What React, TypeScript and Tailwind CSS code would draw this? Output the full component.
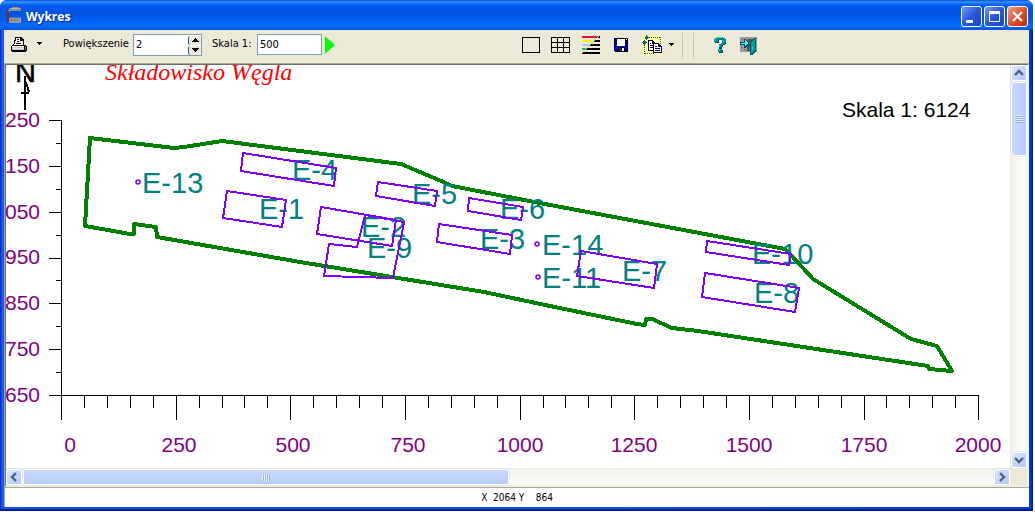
import React from "react";

type Point = [number, number];

const boundary: Point[] = [
  [90, 138], [174, 148], [184, 147], [222, 141], [401, 164], [446, 183], [452, 186], [550, 205],
  [785, 249], [792, 256], [813, 279], [911, 339], [937, 346], [952, 371], [929, 369], [928, 366],
  [698, 331], [672, 328], [652, 319], [646, 319], [645, 325], [637, 324], [550, 306], [484, 292],
  [300, 262], [157, 237], [156, 227], [134, 224], [134, 234], [130, 234], [85, 226],
];

const areas: Point[][] = [
  [[243, 153], [336, 168], [334, 186], [241, 171]],
  [[227, 191], [286, 200], [282, 227], [223, 218]],
  [[378, 182], [437, 191], [435, 206], [376, 196]],
  [[469, 198], [523, 207], [521, 220], [468, 211]],
  [[439, 224], [512, 235], [510, 254], [437, 242]],
  [[321, 207], [396, 220], [392, 246], [317, 234]],
  [[365, 215], [404, 222], [393, 278], [324, 276], [329, 244], [357, 247]],
  [[581, 251], [657, 264], [654, 288], [577, 276]],
  [[707, 241], [791, 254], [789, 265], [706, 252]],
  [[705, 273], [799, 288], [795, 312], [702, 297]],
];

const labels: { text: string; x: number; y: number }[] = [
  { text: "E-13", x: 142, y: 193 },
  { text: "E-4", x: 292, y: 180 },
  { text: "E-1", x: 259, y: 219 },
  { text: "E-5", x: 412, y: 204 },
  { text: "E-6", x: 500, y: 219 },
  { text: "E-2", x: 361, y: 237 },
  { text: "E-9", x: 367, y: 258 },
  { text: "E-3", x: 480, y: 249 },
  { text: "E-14", x: 542, y: 255 },
  { text: "E-11", x: 542, y: 288 },
  { text: "E-7", x: 622, y: 281 },
  { text: "E-10", x: 752, y: 264 },
  { text: "E-8", x: 754, y: 303 },
];

const emitters: Point[] = [[138, 182], [537, 244], [538, 277]];

const xLabels: [string, number][] = [
  ["0", 70], ["250", 179], ["500", 293], ["750", 408], ["1000", 520],
  ["1250", 634], ["1500", 749], ["1750", 864], ["2000", 978],
];
const yLabels = ["250", "150", "050", "950", "850", "750", "650"];

const toPoints = (points: Point[]) => points.map((p) => p.join(",")).join(" ");

function Chart() {
  const xTicks = Array.from({ length: 41 }, (_, i) => i);
  const yTicks = Array.from({ length: 13 }, (_, i) => i);
  return (
    <svg width="1004" height="403" viewBox="6 65 1004 403" className="block max-w-none" role="img" aria-label="Składowisko Węgla">
      <g fontFamily="'Liberation Serif', serif" fontSize="24" fontStyle="italic" fill="#ff0000">
        <text x="105" y="80">Składowisko Węgla</text>
      </g>
      <g fontFamily="'Liberation Sans', sans-serif">
        <text x="15" y="82" fontSize="29" fill="#000" stroke="#000" strokeWidth="0.5">N</text>
        <text x="842" y="117" fontSize="21" fill="#000">Skala 1: 6124</text>
        <g fontSize="21" fill="#800080">
          {xLabels.map(([text, x]) => (
            <text key={text} x={x} y="452" textAnchor="middle">{text}</text>
          ))}
          {yLabels.map((text, i) => (
            <text key={text} x="40" y={127 + Math.round(i * 45.8)} textAnchor="end">{text}</text>
          ))}
        </g>
      </g>
      <path d="M25 76V110M21 93H29M26 82L29 92" fill="none" stroke="#000" strokeWidth="2" shapeRendering="crispEdges" />
      <g stroke="#000" strokeWidth="1" shapeRendering="crispEdges">
        <path d="M61.5 120V419M49 395.5H979" fill="none" />
        {xTicks.map((i) => {
          const x = Math.round(61 + i * 22.93) + 0.5;
          return <line key={i} x1={x} x2={x} y1="395" y2={i % 5 === 0 ? 420 : 408} />;
        })}
        {yTicks.map((i) => {
          const y = Math.round(120 + i * 22.92) + 0.5;
          return <line key={i} x1={i % 2 === 0 ? 49 : 56} x2="61" y1={y} y2={y} />;
        })}
      </g>
      <polygon points={toPoints(boundary)} fill="none" stroke="#008000" strokeWidth="4" strokeLinejoin="round" shapeRendering="crispEdges" />
      <g fontFamily="'Liberation Sans', sans-serif" fontSize="29" fill="#008080">
        {labels.map((l) => (
          <text key={l.text} x={l.x} y={l.y}>{l.text}</text>
        ))}
      </g>
      <g fill="none" stroke="#8000ff" strokeWidth="2" shapeRendering="crispEdges">
        {areas.map((a, i) => (
          <polygon key={i} points={toPoints(a)} />
        ))}
      </g>
      <g fill="#fff" stroke="#8000ff" strokeWidth="1.6">
        {emitters.map(([x, y]) => (
          <circle key={`${x}-${y}`} cx={x} cy={y} r="2" />
        ))}
      </g>
    </svg>
  );
}

function FactoryIcon() {
  return (
    <svg width="16" height="18" viewBox="0 0 16 18" shapeRendering="crispEdges" aria-hidden="true">
      <path d="M1 4h1V2h3V1h7v1h2v3H3v1H1z" fill="#8d8d8d" />
      <path d="M4 2h8v1H4z" fill="#b5b5b5" />
      <path d="M0 5h2v11H0z" fill="#8c2020" />
      <path d="M2 12h2v-1h1v1h2v-1h1v1h2v-1h1v1h2v-1h1v6H2z" fill="#9a9a9e" />
      <path d="M4 13h1v2H4zM7 13h1v2H7zM10 13h1v2h-1z" fill="#6c6c74" />
    </svg>
  );
}

function PrinterIcon() {
  return (
    <svg width="16" height="16" viewBox="0 0 16 16" shapeRendering="crispEdges" aria-hidden="true">
      <path d="M4 0h6l3 3v6H2V7h1V3h1z" fill="#000" />
      <path d="M5 1h4v3h3v4H3V7h1V4h1z" fill="#fff" />
      <path d="M6 2h2v1H6zM6 4h2v1H6zM5 6h5v1H5z" fill="#000" />
      <path d="M1 8h14v1h1v5h-1v1H1v-1H0V9h1z" fill="#000" />
      <path d="M1 9h12v1H1z" fill="#fff" />
      <path d="M1 10h12v3H1z" fill="#c8c8c8" />
      <path d="M1 11h12v1H1z" fill="#e4e4e4" />
      <path d="M14 9h1v4h-1z" fill="#808080" />
    </svg>
  );
}

function DropArrow() {
  return (
    <svg width="5" height="3" viewBox="0 0 5 3" shapeRendering="crispEdges" aria-hidden="true">
      <path d="M0 0h5v1H4v1H3v1H2V2H1V1H0z" fill="#000" />
    </svg>
  );
}

function GridIcon() {
  return (
    <svg width="19" height="16" viewBox="0 0 19 16" shapeRendering="crispEdges" aria-hidden="true">
      <path d="M0 0h19v16H0z" fill="#000" />
      <path d="M1 1h5v4H1zM7 1h5v4H7zM13 1h5v4h-5zM1 6h5v4H1zM7 6h5v4H7zM13 6h5v4h-5zM1 11h5v4H1zM7 11h5v4H7zM13 11h5v4h-5z" fill="#ece9d8" />
    </svg>
  );
}

function StripesIcon() {
  return (
    <svg width="19" height="20" viewBox="0 0 19 20" aria-hidden="true">
      <path d="M0 2h18v2H0zM0 6h18v2H0zM0 10h18v2H0zM0 14h18v2H0zM0 18h18v2H0z" fill="#000" />
      <path d="M0 2h17l-2 2H0z" fill="#dc143c" />
      <path d="M0 6h13l-2 2H0z" fill="#fff200" />
      <path d="M0 10h9l-2 2H0z" fill="#a6caf0" />
      <path d="M0 14h5l-2 2H0z" fill="#22b14c" />
      <path d="M19 0L0 19" stroke="#c5d0c0" strokeWidth="1" />
    </svg>
  );
}

function FloppyIcon() {
  return (
    <svg width="14" height="14" viewBox="0 0 14 14" shapeRendering="crispEdges" aria-hidden="true">
      <path d="M0 0h14v14H1v-1H0z" fill="#000" />
      <path d="M1 1h2v7h8V3h2v10H1z" fill="#0000d0" />
      <path d="M3 1h8v7H3z" fill="#fff" />
      <path d="M12 1h1v1h-1z" fill="#fff" />
      <path d="M4 9h7v5H4z" fill="#000" />
      <path d="M8 10h2v3H8z" fill="#fff" />
      <path d="M5 10h2v3H5z" fill="#303060" />
    </svg>
  );
}

function CopyIcon() {
  return (
    <svg width="20" height="20" viewBox="0 0 20 20" shapeRendering="crispEdges" aria-hidden="true">
      <path d="M0 0h20v20H0z" fill="#ffffa0" />
      <path d="M7 2.500H19M2.500 10V19M3 18.500H12M18.500 2V9" fill="none" stroke="#00648c" strokeDasharray="1 1" />
      <path d="M4 0h1v1h1v1h1v1H6v1H5v1H4V4H3V2h1zM2 5h1v1h1v1h1v1H4v1H3v1H2V9H1V8H0V7h1V6h1z" fill="#00648c" />
      <path d="M6 5h4l3 3v8H6z" fill="#000" />
      <path d="M7 6h3v3h2v6H7z" fill="#fff" />
      <path d="M8 8h1v1H8zM8 10h3v1H8zM8 12h3v1H8z" fill="#000" />
      <path d="M11 8h5l4 4v6h-9z" fill="#000060" />
      <path d="M12 9h4v3h3v5h-7z" fill="#fff" />
      <path d="M13 11h2v1h-2zM13 13h5v1h-5zM13 15h5v1h-5z" fill="#000060" />
    </svg>
  );
}

function HelpIcon() {
  return (
    <svg width="13" height="16" viewBox="0 0 13 16" shapeRendering="crispEdges" aria-hidden="true">
      <path d="M3 1h7v1h2v5h-1v1H9v2H8v2H5V8h2V7h1V3H5v3H1V3h1V2h1zM5 13h4v3H5z" fill="#004a5a" />
      <path d="M3 0h6v1h2v1h1v3h-1v2H9v1H8v2H5V7h2V6h1V2H5v1H4v2H0V2h1V1h2zM4 12h4v3H4z" fill="#008c96" />
      <path d="M3 0h5v1H3zM1 2h1v2H1zM9 3h1v2H9zM5 8h1v2H5zM5 12h1v2H5z" fill="#00e0e0" />
    </svg>
  );
}

function ExitIcon() {
  return (
    <svg width="18" height="19" viewBox="0 0 18 19" shapeRendering="crispEdges" aria-hidden="true">
      <path d="M0 1h17v15H0z" fill="#9a9a9a" />
      <path d="M7 3h7v12H7z" fill="#585858" />
      <path d="M0 5h1v1H0zM2 3h1v1H2zM4 13h1v1H4zM1 11h1v1H1z" fill="#606060" />
      <path d="M10 5l5-3h1v14l-4 3h-2z" fill="#005a64" />
      <path d="M11 6l4-3v12l-4 3z" fill="#009aa4" />
      <path d="M12 11h1v2h-1z" fill="#00ffff" />
      <path d="M0 6h4V3h2v1h1v1h1v1h1v3H8v1H7v1H6v1H4V9H0z" fill="#004a5a" />
      <path d="M1 7h4V4h1v1h1v1h1v2H7v1H6v1H5V8H1z" fill="#40ffff" />
    </svg>
  );
}

function TitleButton({ label, close, children }: { label: string; close?: boolean; children: React.ReactNode }) {
  return (
    <button
      aria-label={label}
      className={
        close
          ? "flex size-[21px] items-center justify-center rounded-[3px] border border-white bg-linear-to-br from-[#f0a080] via-[#e0502c] to-[#b83008]"
          : "flex size-[21px] items-center justify-center rounded-[3px] border border-white bg-linear-to-br from-[#7096f0] via-[#2858dc] to-[#1444c8]"
      }
    >
      <svg width="15" height="15" viewBox="0 0 15 15" fill="none" stroke="#fff" aria-hidden="true">{children}</svg>
    </button>
  );
}

function ScrollButton({ label, path }: { label: string; path: string }) {
  return (
    <button
      aria-label={label}
      className="flex size-4 shrink-0 items-center justify-center rounded-[2px] border border-white bg-linear-to-br from-[#dce6fe] to-[#b0c8f8] shadow-[0_0_1px_#6a90d8]"
    >
      <svg width="10" height="10" viewBox="0 0 10 10" fill="none" stroke="#4d6185" strokeWidth="2.4" aria-hidden="true">
        <path d={path} />
      </svg>
    </button>
  );
}

export default function App() {
  return (
    <div className="flex h-screen bg-white pr-[2px] pb-px font-['DejaVu_Sans_Condensed','DejaVu_Sans',sans-serif] text-[11px] leading-[14px] text-black">
      <main className="flex min-w-0 flex-1 flex-col overflow-hidden rounded-t-[7px] bg-[#0842dc]">
        <header className="flex h-[30px] shrink-0 items-center bg-[linear-gradient(to_bottom,#0050d8_0px,#3c90ff_2px,#0a6cf8_4px,#0058e6_7px,#0054e3_13px,#005cf4_20px,#0068ff_24px,#006aff_27px,#0050d0_30px)] pr-[5px] pl-[7px]">
          <FactoryIcon />
          <h1 className="ml-[3px] flex-1 pt-1 font-['Open_Sans',sans-serif] text-[12px] leading-4 font-bold text-white [text-shadow:1px_1px_0_#0a2a90]">Wykres</h1>
          <div className="flex gap-[2px] pt-[3px]">
            <TitleButton label="Minimalizuj"><path d="M2 12.500h7" strokeWidth="3" /></TitleButton>
            <TitleButton label="Maksymalizuj"><path d="M2 3.500h11" strokeWidth="3" /><path d="M2.500 3v9.500h10V3" /></TitleButton>
            <TitleButton label="Zamknij" close><path d="M3 3l9 9M12 3l-9 9" strokeWidth="2.200" /></TitleButton>
          </div>
        </header>
        <div className="flex min-h-0 flex-1 flex-col bg-[linear-gradient(to_right,#0019cf_0px,#0831d9_1px,#166aee_2px,#0855dd_4px,#0855dd_50%,#0040e0_calc(100%-3px),#001890_100%)] px-1 pb-1 shadow-[inset_0_-2px_0_#001890]">
          <div className="flex min-h-0 flex-1 flex-col bg-[#ece9d8]">
            <div className="flex h-[33px] shrink-0 items-center pb-[6px] pl-[7px]">
              <button aria-label="Drukuj" className="mt-[2px]"><PrinterIcon /></button>
              <button aria-label="Opcje drukowania" className="ml-[10px]"><DropArrow /></button>
              <label htmlFor="zoom" className="ml-[21px] w-[70px] whitespace-nowrap">Powiększenie</label>
              <div className="mt-[3px] flex h-[22px] w-[69px] border border-[#7f9db9] bg-white">
                <input id="zoom" defaultValue="2" className="w-0 min-w-0 flex-1 pl-[2px] outline-none" />
                <div className="flex w-[13px] flex-col justify-center gap-px">
                  <button aria-label="Zwiększ" className="flex h-[9px] items-center justify-center rounded-[2px] border-l border-[#1c5a9a] bg-[#ece9d8]">
                    <svg width="7" height="4" viewBox="0 0 7 4" shapeRendering="crispEdges" aria-hidden="true"><path d="M3 0h1v1h1v1h1v1h1v1H0V3h1V2h1V1h1z" /></svg>
                  </button>
                  <button aria-label="Zmniejsz" className="flex h-[9px] items-center justify-center rounded-[2px] border-l border-[#1c5a9a] bg-[#ece9d8]">
                    <svg width="7" height="4" viewBox="0 0 7 4" shapeRendering="crispEdges" aria-hidden="true"><path d="M0 0h7v1H6v1H5v1H4v1H3V3H2V2H1V1H0z" /></svg>
                  </button>
                </div>
              </div>
              <label htmlFor="scale" className="ml-[10px] w-[45px] whitespace-nowrap">Skala 1:</label>
              <input id="scale" defaultValue="500" className="mt-[2px] h-[21px] w-[65px] border border-[#7f9db9] bg-white pl-[2px] outline-none" />
              <button aria-label="Zastosuj" className="mt-[3px] ml-[3px]">
                <svg width="10" height="18" viewBox="0 0 10 18" aria-hidden="true"><path d="M0 0L10 9L0 18z" fill="#00ff00" /></svg>
              </button>
              <button aria-label="Ramka" className="mt-[3px] ml-[187px] h-4 w-[18px] border border-black" />
              <button aria-label="Siatka" className="mt-[3px] ml-[11px]"><GridIcon /></button>
              <button aria-label="Kolory" className="ml-[12px]"><StripesIcon /></button>
              <button aria-label="Zapisz" className="mt-[3px] ml-[13px]"><FloppyIcon /></button>
              <button aria-label="Kopiuj" className="mt-[3px] ml-[14px]"><CopyIcon /></button>
              <button aria-label="Opcje kopiowania" className="mt-px ml-[7px]"><DropArrow /></button>
              <div className="mt-1 ml-[8px] h-[25px] w-[12px] border-x border-[#c9c5b0]" />
              <button aria-label="Pomoc" className="mt-[3px] ml-[20px]"><HelpIcon /></button>
              <button aria-label="Wyjście" className="mt-[3px] ml-[13px]"><ExitIcon /></button>
            </div>
            <section className="min-h-0 flex-1 border-t border-l border-[#aca899]">
              <div className="flex h-full border-t border-r-2 border-b-2 border-l border-t-[#716f64] border-r-[#f4f3ea] border-b-[#f1efe2] border-l-[#716f64]">
                <div className="flex min-w-0 flex-1 flex-col">
                  <div className="min-h-0 flex-1 overflow-hidden bg-white"><Chart /></div>
                  <div className="flex h-[17px] shrink-0 items-center justify-between border-t border-[#eeede5] bg-linear-to-b from-[#f3f1ec] to-[#fefefb]">
                    <ScrollButton label="W lewo" path="M7 1L3 5L7 9" />
                    <div className="ml-px flex min-w-0 flex-1">
                      <div className="flex h-4 w-1/2 items-center justify-center gap-px rounded-[2px] border border-white bg-linear-to-b from-[#c9d8fc] via-[#c3d3fd] to-[#b3cbf8] shadow-[0_0_1px_#6a90d8]">
                        <div className="h-[7px] w-2 bg-[repeating-linear-gradient(to_right,#eef4fe_0px,#eef4fe_1px,#8cb0f8_1px,#8cb0f8_2px)]" />
                      </div>
                    </div>
                    <ScrollButton label="W prawo" path="M3 1L7 5L3 9" />
                  </div>
                </div>
                <div className="flex w-[17px] shrink-0 flex-col">
                  <div className="flex flex-1 flex-col items-center border-l border-[#eeede5] bg-linear-to-r from-[#f3f1ec] to-[#fefefb]">
                    <ScrollButton label="W górę" path="M1 7L5 3L9 7" />
                    <div className="flex min-h-0 w-full flex-1 pt-px">
                      <div className="flex h-1/5 w-full items-center justify-center rounded-[2px] border border-white bg-linear-to-r from-[#c9d8fc] via-[#c3d3fd] to-[#b3cbf8] shadow-[0_0_1px_#6a90d8]">
                        <div className="h-2 w-[7px] bg-[repeating-linear-gradient(to_bottom,#eef4fe_0px,#eef4fe_1px,#8cb0f8_1px,#8cb0f8_2px)]" />
                      </div>
                    </div>
                    <ScrollButton label="W dół" path="M1 3L5 7L9 3" />
                  </div>
                  <div className="h-[17px] bg-[#ece9d8]" />
                </div>
              </div>
            </section>
            <footer className="flex h-5 shrink-0 items-center justify-center border-t border-l border-[#aca899] bg-white text-[10px] whitespace-pre">X  2064 Y    864</footer>
          </div>
        </div>
      </main>
    </div>
  );
}
